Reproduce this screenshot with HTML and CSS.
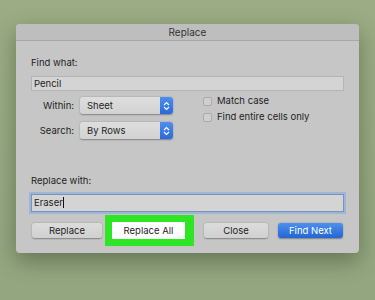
FILE: index.html
```html
<!DOCTYPE html>
<html lang="en">
<head>
    <meta charset="UTF-8">
    <meta name="viewport" content="width=device-width, initial-scale=1.0">
    <title>Replace</title>
    <link rel="stylesheet" href="styles.css">
</head>
<body>
    <div class="dialog">
        <div class="titlebar">Replace</div>

        <div class="content">
            <!-- Find section -->
            <div class="label">Find what:</div>
            <div class="field">Pencil</div>

            <div class="options">
                <div class="selects">
                    <div class="select-row">
                        <span class="select-label">Within:</span>
                        <div class="select">
                            <span class="select-value">Sheet</span>
                            <span class="stepper">
                                <svg width="7" height="10" viewBox="0 0 7 10"><path d="M1 4 L3.5 1.5 L6 4 M1 6 L3.5 8.5 L6 6" fill="none" stroke="#fff" stroke-width="1.1"/></svg>
                            </span>
                        </div>
                    </div>
                    <div class="select-row">
                        <span class="select-label">Search:</span>
                        <div class="select">
                            <span class="select-value">By Rows</span>
                            <span class="stepper">
                                <svg width="7" height="10" viewBox="0 0 7 10"><path d="M1 4 L3.5 1.5 L6 4 M1 6 L3.5 8.5 L6 6" fill="none" stroke="#fff" stroke-width="1.1"/></svg>
                            </span>
                        </div>
                    </div>
                </div>
                <div class="checks">
                    <label class="check"><span class="box"></span>Match case</label>
                    <label class="check"><span class="box"></span>Find entire cells only</label>
                </div>
            </div>

            <!-- Replace section -->
            <div class="label replace-label">Replace with:</div>
            <div class="field focused">Eraser<span class="caret"></span></div>

            <div class="buttons">
                <button class="btn btn-replace">Replace</button>
                <button class="btn btn-all">Replace All</button>
                <button class="btn btn-close">Close</button>
                <button class="btn btn-next">Find Next</button>
            </div>
        </div>
    </div>
</body>
</html>
```

FILE: styles.css
```css
body {
    margin: 0;
    height: 300px;
    background: linear-gradient(#9cad85, #97a983 60%, #93a67f);
    font-family: Inter, "Liberation Sans", sans-serif;
    color: #1e1e1e;
    overflow: hidden;
}
.dialog {
    width: 343px;
    margin: 24px 0 0 16px;
    background-color: #c6c6c6;
    border-radius: 4px;
    box-shadow: 0 8px 22px rgba(40, 55, 30, 0.45);
    overflow: hidden;
}
.titlebar {
    height: 16px;
    line-height: 16px;
    text-align: center;
    font-size: 10px;
    color: #333;
    background-color: #bebebe;
    border-bottom: 1px solid #a8a8a8;
}
.content {
    padding: 16px 15px 14px 15px;
}
.label {
    font-size: 9.5px;
    line-height: 11px;
}
.field {
    margin-top: 8px;
    height: 15px;
    line-height: 14px;
    padding-left: 2px;
    font-size: 9.5px;
    background-color: #d4d4d4;
    border: 1px solid #b4b4b4;
    box-sizing: border-box;
}
.options {
    display: flex;
    margin-top: 6px;
    height: 41px;
}
.selects {
    display: flex;
    flex-direction: column;
    gap: 8px;
    width: 158px;
}
.select-row {
    display: flex;
    align-items: center;
    gap: 6px;
}
.select-label {
    width: 43px;
    text-align: right;
    font-size: 9.5px;
}
.select {
    display: flex;
    width: 93px;
    height: 17px;
    border-radius: 3px;
    background: linear-gradient(#dedede, #d2d2d2);
    box-shadow: 0 0.5px 1.5px rgba(0, 0, 0, 0.35);
    overflow: hidden;
}
.select-value {
    flex: 1;
    padding-left: 7px;
    font-size: 9.5px;
    line-height: 17px;
}
.stepper {
    width: 13px;
    display: flex;
    align-items: center;
    justify-content: center;
    background: linear-gradient(#4f8ff0, #2a6ad8);
}
.checks {
    display: flex;
    flex-direction: column;
    gap: 6px;
    margin-left: 14px;
    margin-top: -1px;
}
.check {
    display: flex;
    align-items: center;
    gap: 5px;
    font-size: 9.5px;
    line-height: 10px;
}
.box {
    width: 9px;
    height: 9px;
    border-radius: 2px;
    background-color: #cfcfcf;
    border: 1px solid #aaaaaa;
    box-sizing: border-box;
}
.replace-label {
    margin-top: 37px;
}
.focused {
    margin-top: 8px;
    height: 18px;
    line-height: 16px;
    border: 1px solid #7b93b8;
    box-shadow: 0 0 0 2px #9db5d8;
}
.caret {
    display: inline-block;
    width: 1px;
    height: 11px;
    background-color: #111;
    vertical-align: -2px;
}
.buttons {
    display: flex;
    margin-top: 11px;
    margin-left: 1px;
}
.btn {
    height: 15px;
    padding: 0;
    border: none;
    border-radius: 3px;
    font-family: Inter, "Liberation Sans", sans-serif;
    font-size: 9.5px;
    color: #1e1e1e;
    background: linear-gradient(#dcdcdc, #d0d0d0);
    box-shadow: 0 0.5px 1.5px rgba(0, 0, 0, 0.35);
}
.btn-replace {
    width: 70px;
}
.btn-all {
    width: 73px;
    height: 17px;
    margin: -1px 0 0 10px;
    border-radius: 0;
    background: #ffffff;
    box-shadow: 0 0 0 7px #2ee526, 2px 0 0 7px #2ee526;
}
.btn-close {
    width: 64px;
    margin-left: 19px;
}
.btn-next {
    width: 65px;
    margin-left: 10px;
    color: #ffffff;
    background: linear-gradient(#4d90ee, #2466d2);
}
```
